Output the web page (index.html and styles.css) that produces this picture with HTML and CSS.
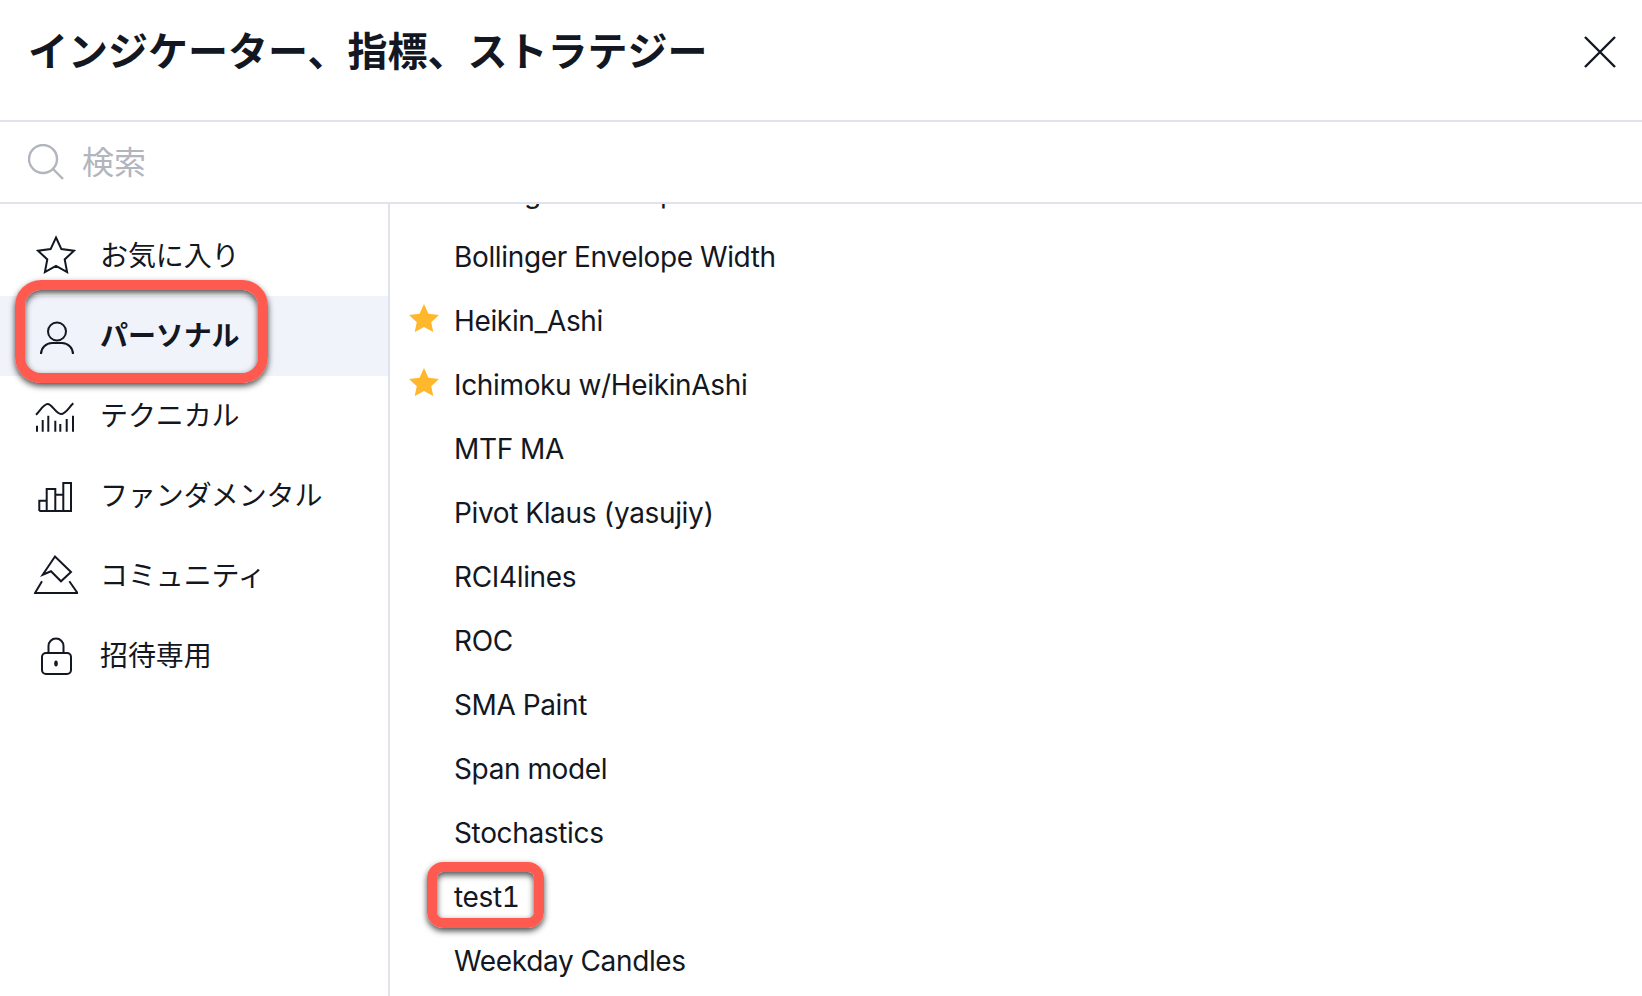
FILE: index.html
```html
<!DOCTYPE html>
<html lang="ja">
<head>
  <meta charset="UTF-8">
  <title>インジケーター、指標、ストラテジー</title>
  <link rel="stylesheet" href="styles.css">
</head>
<body>
  <header class="header">
    <h1 class="title">インジケーター、指標、ストラテジー</h1>
    <svg class="close" viewBox="0 0 32 32"><path d="M1 1L31 31M31 1L1 31"/></svg>
  </header>

  <div class="search">
    <svg class="search-icon" viewBox="0 0 36 36"><circle cx="15" cy="15" r="14"/><path d="M25 25L35 35"/></svg>
    <span class="placeholder">検索</span>
  </div>

  <div class="main">
    <nav class="sidebar">
      <div class="cat">
        <svg class="cat-icon" viewBox="0 0 44 44"><path d="M22 3.5l5.4 11.6 12.6 1.6-9.3 8.7 2.4 12.6L22 31.8 10.900 38l2.400-12.600-9.300-8.700 12.600-1.600z"/></svg>
        <span class="cat-label">お気に入り</span>
      </div>
      <div class="cat active">
        <svg class="cat-icon" viewBox="0 0 44 44"><circle cx="23" cy="17.500" r="9"/><path d="M7 40c0-6 5-11 11-11h10c6 0 11 5 11 11"/></svg>
        <span class="cat-label">パーソナル</span>
      </div>
      <div class="cat">
        <svg class="cat-icon" viewBox="0 0 44 44"><path d="M2 20.700C6 17 9.500 10 13.700 10S22 20 27 20 35 13 39.300 9.300M3 37.700V31.700M8.700 37.700V26M14.300 37.700V21.700M21.300 37.700V26.700M26.300 37.700V30M32.700 37.700V25M39 37.700V21.700"/></svg>
        <span class="cat-label">テクニカル</span>
      </div>
      <div class="cat">
        <svg class="cat-icon" viewBox="0 0 44 44"><path d="M5.300 37V26.700H12.700M12.700 37V15H21.300V37M21.300 20.700H29.300M29.300 37V9H37V37ZM5.300 37H37"/></svg>
        <span class="cat-label">ファンダメンタル</span>
      </div>
      <div class="cat">
        <svg class="cat-icon" viewBox="0 0 44 44"><path d="M8.700 20.700L21 2.500 37 18 27 27.300 17 17.300ZM8 27.300L1 39H43.500L35.300 27.300"/></svg>
        <span class="cat-label">コミュニティ</span>
      </div>
      <div class="cat">
        <svg class="cat-icon" viewBox="0 0 44 44"><rect x="8" y="19" width="29" height="21" rx="4"/><path d="M14.500 19V12a7.500 7.500 0 0 1 15 0v7"/><ellipse class="keyhole" cx="22" cy="29.500" rx="1.800" ry="3"/></svg>
        <span class="cat-label">招待専用</span>
      </div>
    </nav>

    <div class="list">
      <div class="item"><span class="slot"><svg class="fav" viewBox="0 0 30 28"><path d="M15 0l4.500 9.800 10.500 1.200-7.800 7.200 2.100 9.800L15 23l-9.300 5 2.100-9.800L0 11l10.500-1.200z"/></svg></span>Bollinger Envelope</div>
      <div class="item"><span class="slot"></span>Bollinger Envelope Width</div>
      <div class="item"><span class="slot"><svg class="fav" viewBox="0 0 30 28"><path d="M15 0l4.500 9.800 10.500 1.200-7.800 7.200 2.100 9.800L15 23l-9.300 5 2.100-9.800L0 11l10.500-1.200z"/></svg></span>Heikin_Ashi</div>
      <div class="item"><span class="slot"><svg class="fav" viewBox="0 0 30 28"><path d="M15 0l4.500 9.800 10.500 1.200-7.800 7.200 2.100 9.800L15 23l-9.300 5 2.100-9.800L0 11l10.500-1.200z"/></svg></span>Ichimoku w/HeikinAshi</div>
      <div class="item"><span class="slot"></span>MTF MA</div>
      <div class="item"><span class="slot"></span>Pivot Klaus (yasujiy)</div>
      <div class="item"><span class="slot"></span>RCI4lines</div>
      <div class="item"><span class="slot"></span>ROC</div>
      <div class="item"><span class="slot"></span>SMA Paint</div>
      <div class="item"><span class="slot"></span>Span model</div>
      <div class="item"><span class="slot"></span>Stochastics</div>
      <div class="item"><span class="slot"></span>test1</div>
      <div class="item"><span class="slot"></span>Weekday Candles</div>
    </div>
  </div>

  <!-- red callouts drawn on top of the screenshot -->
  <div class="mark mark-personal"></div>
  <div class="mark mark-test"></div>
</body>
</html>
```

FILE: styles.css
```css
html, body { height: 100%; }
body {
  margin: 0;
  background: #fff;
  color: #131722;
  font-family: Inter, "Noto Sans CJK JP", sans-serif;
  display: flex;
  flex-direction: column;
  overflow: hidden;
  position: relative;
}

.header {
  flex: none;
  height: 120px;
  padding: 0 26px 16px 28px;
  box-sizing: border-box;
  display: flex;
  align-items: center;
  justify-content: space-between;
}
.title { margin: 0; font-size: 40px; font-weight: 700; line-height: 48px; }
.close { width: 32px; height: 32px; fill: none; stroke: #131722; stroke-width: 2.4; }

.search {
  flex: none;
  height: 80px;
  border-top: 2px solid #e0e3eb;
  border-bottom: 2px solid #e0e3eb;
  padding-left: 28px;
  display: flex;
  align-items: center;
  gap: 18px;
}
.search-icon { width: 36px; height: 36px; fill: none; stroke: #b2b5be; stroke-width: 2.4; }
.placeholder { font-size: 32px; color: #b2b5be; padding-bottom: 4px; }

.main { flex: 1; display: flex; min-height: 0; }

.sidebar {
  flex: none;
  width: 388px;
  padding-top: 12px;
  border-right: 2px solid #e0e3eb;
}
.cat {
  height: 80px;
  padding-left: 34px;
  display: flex;
  align-items: center;
  gap: 22px;
  font-size: 28px;
}
.cat-label { padding-bottom: 4px; letter-spacing: -0.1px; }
.cat.active { background: #f0f3fa; font-weight: 700; }
.cat-icon { flex: none; width: 44px; height: 44px; fill: none; stroke: #131722; stroke-width: 2; }
.keyhole { fill: #131722; stroke: none; }

.list { flex: 1; overflow: hidden; margin-top: -43px; clip-path: inset(43px 0 0 0); }
.item {
  height: 64px;
  padding-left: 19px;
  display: flex;
  align-items: center;
  font-size: 28px;
  letter-spacing: -0.35px;
  font-variant-numeric: tabular-nums;
}
.slot { flex: none; width: 45px; height: 28px; margin-top: -6px; }
.fav { display: block; width: 30px; height: 28px; fill: #ffb72b; }

.mark {
  position: absolute;
  box-sizing: border-box;
  border: 10px solid #ff5a50;
  box-shadow: 0 3px 6px rgba(0, 0, 0, .7), inset 0 3px 6px rgba(0, 0, 0, .7);
}
.mark-personal { left: 15px; top: 280px; width: 253px; height: 103px; border-radius: 26px; }
.mark-test { left: 427px; top: 862px; width: 117px; height: 66px; border-radius: 16px; }
```
